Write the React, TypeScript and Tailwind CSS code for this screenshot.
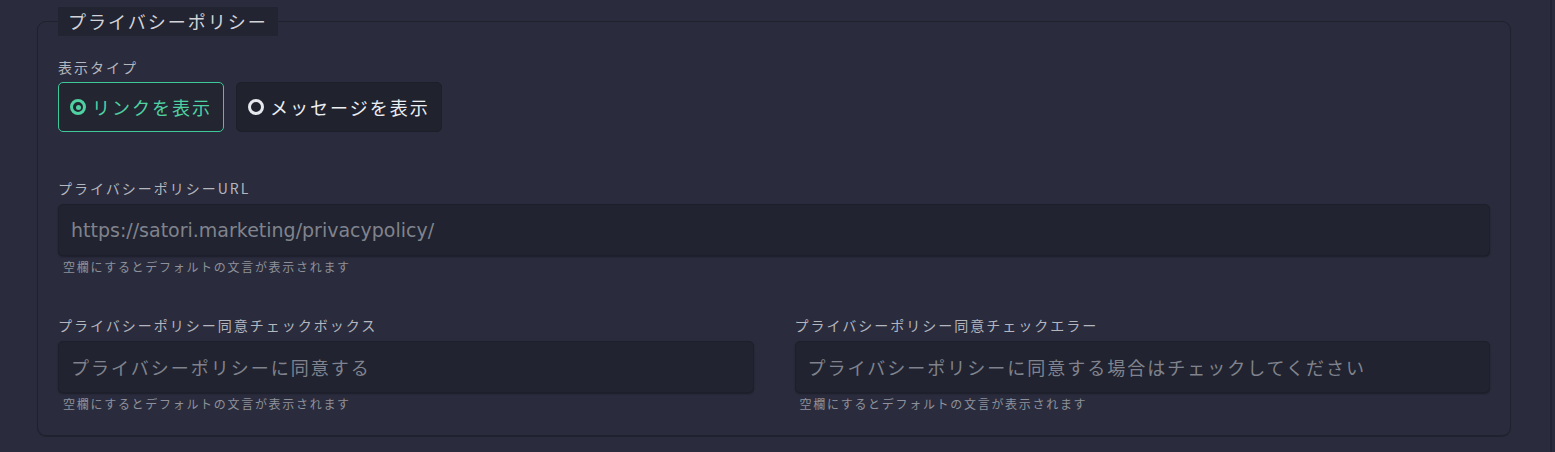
const jp = "font-['Noto_Sans_CJK_JP','Noto_Sans',sans-serif]";

const Field = ({ label, placeholder, latin }: { label: string; placeholder: string; latin?: boolean }) => {
    return (
        <div className="flex flex-col">
            <label className="h-5 text-[14px] leading-5 tracking-[2px] text-[#b3b6bf]">{label}</label>
            <div className="mt-[6px] flex h-[52px] items-center rounded-[5px] border border-[#1d1f2a] bg-[#212330] px-3 shadow-[0_1px_2px_rgba(0,0,0,0.35)]">
                <span
                    className={
                        latin
                            ? "font-['DejaVu_Sans','Noto_Sans_CJK_JP',sans-serif] text-[19px] text-[#80838d]"
                            : "text-[18px] tracking-[2px] text-[#80838d]"
                    }
                >
                    {placeholder}
                </span>
            </div>
            <p className="mt-[3px] pl-[5px] text-[12px] leading-4 tracking-[1.7px] text-[#8e919a]">
                空欄にするとデフォルトの文言が表示されます
            </p>
        </div>
    );
};

const Radio = ({ text, checked }: { text: string; checked?: boolean }) => {
    return (
        <button
            className={
                checked
                    ? "flex h-[50px] items-center gap-[6px] rounded-[5px] border border-[#3ec99a] bg-[#232531] px-[11px] text-[#4fd1a2]"
                    : "flex h-[50px] items-center gap-[6px] rounded-[5px] border border-[#1c1e28] bg-[#20222e] px-[11px] text-[#eceef2]"
            }
        >
            {checked ? (
                <span className="flex h-4 w-4 items-center justify-center rounded-full border-[3px] border-[#4fd1a2]">
                    <span className="h-[5px] w-[5px] rounded-full bg-[#4fd1a2]"></span>
                </span>
            ) : (
                <span className="h-4 w-4 rounded-full border-[3px] border-[#e6e8ee]"></span>
            )}
            <span className="text-[18px] tracking-[2px]">{text}</span>
        </button>
    );
};

export default function App() {
    return (
        <div className={`flex h-[452px] w-full bg-[#2a2c3d] ${jp}`}>
            <div className="flex-1 pl-[37px] pr-[39px] pt-[7px]">
                <fieldset className="rounded-[9px] border border-[#1f212d] px-5 pb-[23px] pt-[21px] shadow-[0_1px_1px_rgba(0,0,0,0.25)]">
                    <legend className="h-[29px] bg-[#222431] px-[10px] text-[18px] leading-[29px] tracking-[2px] text-[#d2d4da]">
                        プライバシーポリシー
                    </legend>

                    {/* 表示タイプ */}
                    <div className="flex flex-col">
                        <span className="h-5 text-[14px] leading-5 tracking-[2px] text-[#b3b6bf]">表示タイプ</span>
                        <div className="mt-[5px] flex gap-3">
                            <Radio text="リンクを表示" checked />
                            <Radio text="メッセージを表示" />
                        </div>
                    </div>

                    <div className="mt-[46px]">
                        <Field label="プライバシーポリシーURL" placeholder="https://satori.marketing/privacypolicy/" latin />
                    </div>

                    <div className="mt-[40px] grid grid-cols-2 gap-x-[41px]">
                        <Field label="プライバシーポリシー同意チェックボックス" placeholder="プライバシーポリシーに同意する" />
                        <Field label="プライバシーポリシー同意チェックエラー" placeholder="プライバシーポリシーに同意する場合はチェックしてください" />
                    </div>
                </fieldset>
            </div>
            <div className="w-[5px] border-l-2 border-[#222436]"></div>
        </div>
    );
}
